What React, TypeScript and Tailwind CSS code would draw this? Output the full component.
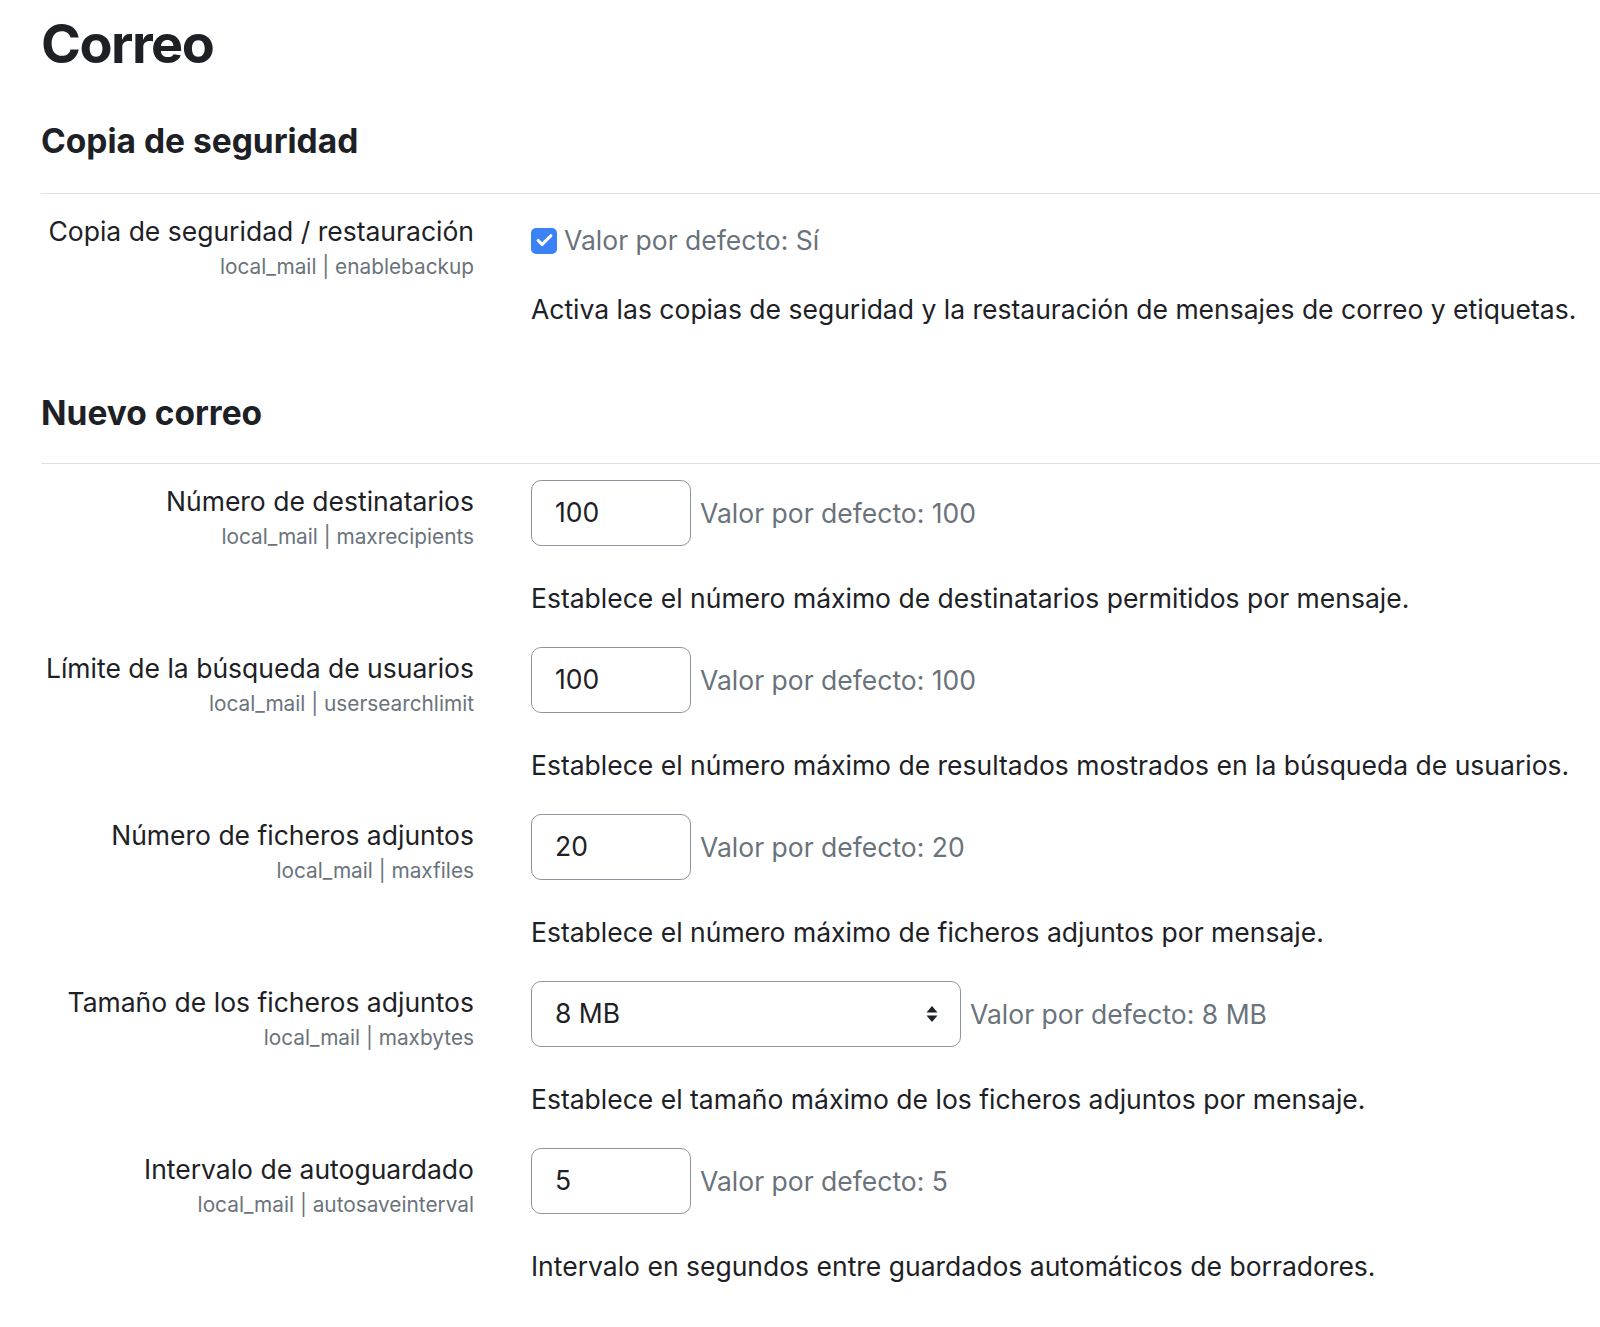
import { Check } from "lucide-react"

type Setting = {
  id: string
  label: string
  name: string
  kind: "checkbox" | "text" | "select"
  value?: string
  defaultText: string
  description: string
}

const backupSettings: Setting[] = [
  {
    id: "enablebackup",
    label: "Copia de seguridad / restauración",
    name: "local_mail | enablebackup",
    kind: "checkbox",
    defaultText: "Valor por defecto: Sí",
    description: "Activa las copias de seguridad y la restauración de mensajes de correo y etiquetas.",
  },
]

const newMailSettings: Setting[] = [
  {
    id: "maxrecipients",
    label: "Número de destinatarios",
    name: "local_mail | maxrecipients",
    kind: "text",
    value: "100",
    defaultText: "Valor por defecto: 100",
    description: "Establece el número máximo de destinatarios permitidos por mensaje.",
  },
  {
    id: "usersearchlimit",
    label: "Límite de la búsqueda de usuarios",
    name: "local_mail | usersearchlimit",
    kind: "text",
    value: "100",
    defaultText: "Valor por defecto: 100",
    description: "Establece el número máximo de resultados mostrados en la búsqueda de usuarios.",
  },
  {
    id: "maxfiles",
    label: "Número de ficheros adjuntos",
    name: "local_mail | maxfiles",
    kind: "text",
    value: "20",
    defaultText: "Valor por defecto: 20",
    description: "Establece el número máximo de ficheros adjuntos por mensaje.",
  },
  {
    id: "maxbytes",
    label: "Tamaño de los ficheros adjuntos",
    name: "local_mail | maxbytes",
    kind: "select",
    value: "8 MB",
    defaultText: "Valor por defecto: 8 MB",
    description: "Establece el tamaño máximo de los ficheros adjuntos por mensaje.",
  },
  {
    id: "autosaveinterval",
    label: "Intervalo de autoguardado",
    name: "local_mail | autosaveinterval",
    kind: "text",
    value: "5",
    defaultText: "Valor por defecto: 5",
    description: "Intervalo en segundos entre guardados automáticos de borradores.",
  },
]

function SettingRow({ setting }: { setting: Setting }) {
  if (setting.kind === "checkbox") {
    return (
      <div className="grid grid-cols-[433px_1fr] gap-x-[57px] pt-[18px]">
        <div className="text-right">
          <div className="text-[26.5px] leading-[39px] text-[#1d2125]">{setting.label}</div>
          <div className="text-[20.8px] leading-[31px] text-[#6a737b]">{setting.name}</div>
        </div>
        <div className="pt-[9px]">
          <div className="flex items-center h-[39px]">
            <span className="flex items-center justify-center w-[26px] h-[26px] rounded-[5px] bg-[#3b82f6]">
              <Check className="w-[19px] h-[19px] text-white" strokeWidth={4} />
            </span>
            <span className="ml-[7px] text-[26.5px] leading-[39px] text-[#6a737b]">{setting.defaultText}</span>
          </div>
          <p className="mt-[30px] text-[26.5px] leading-[39px] text-[#1d2125]">{setting.description}</p>
        </div>
      </div>
    )
  }

  return (
    <div className="grid grid-cols-[433px_1fr] gap-x-[57px] pt-[16px] pb-[13px]">
      <div className="text-right pt-[2px]">
        <div className="text-[26.5px] leading-[39px] text-[#1d2125]">{setting.label}</div>
        <div className="text-[20.8px] leading-[31px] text-[#6a737b]">{setting.name}</div>
      </div>
      <div>
        <div className="flex items-center">
          {setting.kind === "select" ? (
            <div className="flex items-center justify-between w-[430px] h-[66px] pl-[23px] pr-[22px] border border-[#8f959e] rounded-[10px] text-[26.5px] text-[#1d2125]">
              <span>{setting.value}</span>
              <svg width="12" height="18" viewBox="0 0 12 18" className="text-[#1d2125]">
                <path d="M6 1 L11.5 7.5 H0.5 Z" fill="currentColor" />
                <path d="M6 17 L11.5 10.5 H0.5 Z" fill="currentColor" />
              </svg>
            </div>
          ) : (
            <div className="flex items-center w-[160px] h-[66px] pl-[23px] border border-[#8f959e] rounded-[10px] text-[26.5px] text-[#1d2125]">
              {setting.value}
            </div>
          )}
          <span className="ml-[9px] text-[26.5px] leading-[39px] text-[#6a737b]">{setting.defaultText}</span>
        </div>
        <p className="mt-[33px] text-[26.5px] leading-[39px] text-[#1d2125]">{setting.description}</p>
      </div>
    </div>
  )
}

export default function App() {
  return (
    <div className="min-h-screen bg-white pl-[41px] pt-[10px] font-[family-name:Inter,sans-serif] text-[#1d2125]">
      <h2 className="text-[54px] leading-[67px] font-bold tracking-[-1.5px]">Correo</h2>

      <section className="mt-[43px]">
        <h3 className="text-[33.5px] leading-[42px] font-bold">Copia de seguridad</h3>
        <hr className="mt-[31px] border-t border-[#dee2e6]" />
        {backupSettings.map((s) => (
          <SettingRow key={s.id} setting={s} />
        ))}
      </section>

      <section className="mt-[63px]">
        <h3 className="text-[33.5px] leading-[42px] font-bold">Nuevo correo</h3>
        <hr className="mt-[29px] border-t border-[#dee2e6]" />
        {newMailSettings.map((s) => (
          <SettingRow key={s.id} setting={s} />
        ))}
      </section>
    </div>
  )
}
